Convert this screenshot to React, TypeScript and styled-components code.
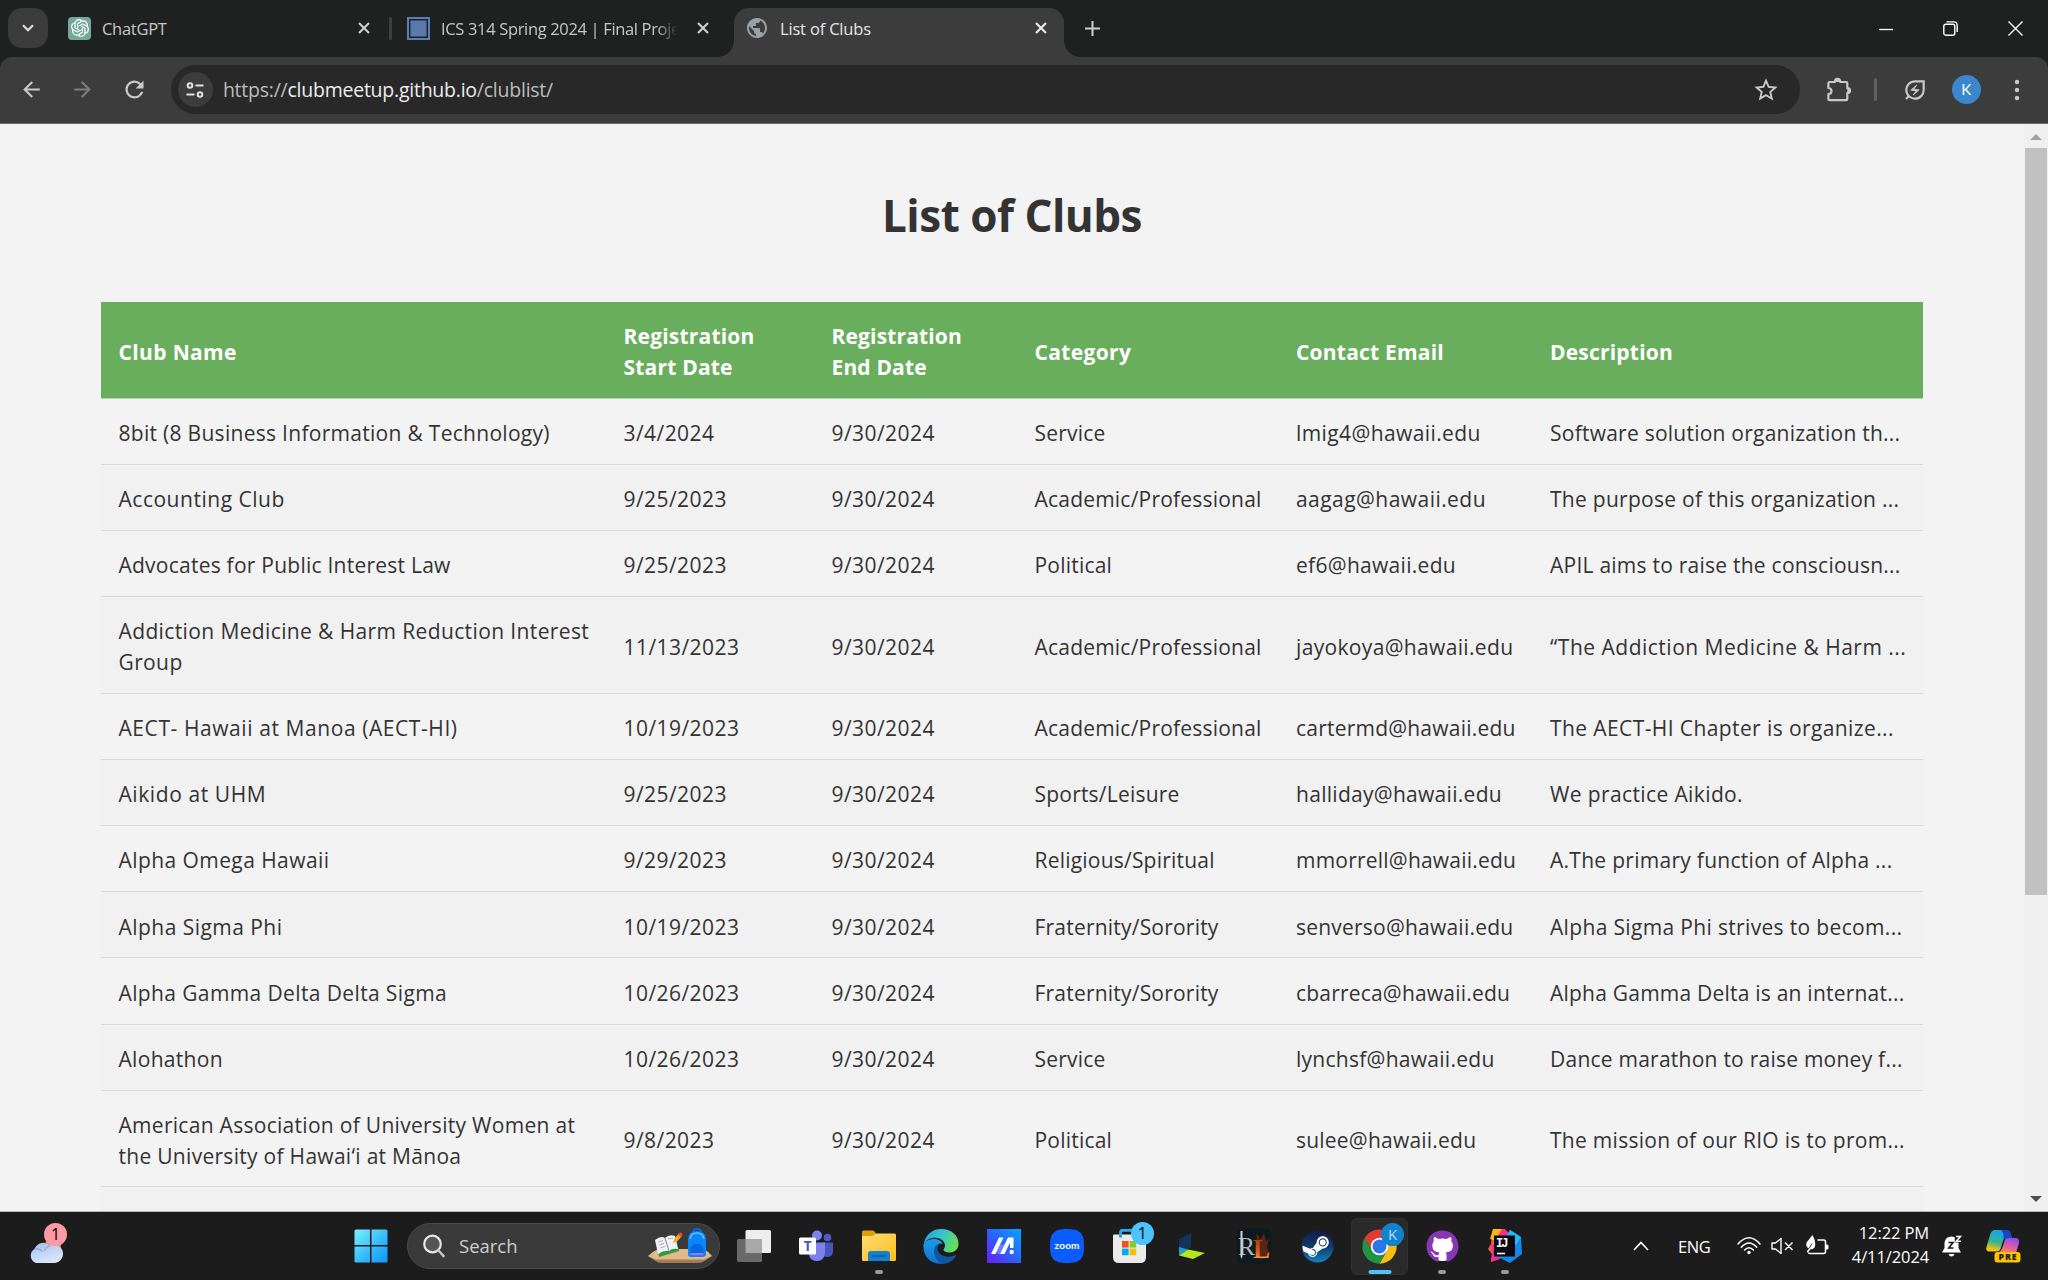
import React from 'react';
import styled, { createGlobalStyle, css } from 'styled-components';
import { FaGithub, FaSteam } from 'react-icons/fa';
import { SiOpenai } from 'react-icons/si';
import { MdArrowBack, MdArrowForward, MdRefresh, MdPublic, MdStarBorder, MdOutlineEnergySavingsLeaf } from 'react-icons/md';

const uiFont = `'Open Sans', 'Noto Sans', sans-serif`;

const Global = createGlobalStyle`
  *, *::before, *::after { box-sizing: border-box; }
  body { margin: 0; background: #1f2120; font-family: ${uiFont}; overflow: hidden; }
  svg { display: block; flex: none; }
`;

const Screen = styled.div`
  width: 2048px;
  height: 1280px;
  display: grid;
  grid-template-rows: 57px 67px 1088px 68px;
  overflow: hidden;
`;

/* ---------- Tab strip ---------- */

const TabStrip = styled.header`
  display: flex;
  align-items: flex-start;
  background: #1f2120;
  color: #c7c7c7;
`;

const TabSearch = styled.button`
  width: 40px;
  height: 40px;
  margin: 8px 8px 0;
  border: 0;
  padding: 0;
  border-radius: 14px;
  background: #3a3b3a;
  display: grid;
  place-items: center;
`;

const Tab = styled.div<{ $active?: boolean }>`
  position: relative;
  height: 49px;
  margin-top: 8px;
  display: flex;
  align-items: center;
  width: 332px;
  padding: 0 18px 9px 12px;
  ${(p) =>
    p.$active &&
    css`
      width: 330px;
      margin-left: 7px;
      padding: 0 17px 9px 11px;
      background: #3c3c3c;
      color: #e6e6e6;
      border-radius: 15px 15px 0 0;
      &::before,
      &::after {
        content: '';
        position: absolute;
        bottom: 0;
        width: 16px;
        height: 16px;
      }
      &::before {
        left: -16px;
        background: radial-gradient(circle at 0 0, transparent 15.5px, #3c3c3c 16px);
      }
      &::after {
        right: -16px;
        background: radial-gradient(circle at 100% 0, transparent 15.5px, #3c3c3c 16px);
      }
    `}
`;

const TabTitle = styled.span<{ $tracking: number; $fade?: boolean }>`
  flex: 1;
  margin: 2px 22px 0 11px;
  overflow: hidden;
  white-space: nowrap;
  font-size: 16.5px;
  line-height: 24px;
  letter-spacing: ${(p) => p.$tracking}px;
  ${(p) => p.$fade && css`
    margin-right: 17px;
    mask-image: linear-gradient(90deg, #000 90%, transparent 99%);
  `}
`;

const ChatBadge = styled.span`
  width: 23px;
  height: 23px;
  border-radius: 4px;
  background: #74a898;
  color: #fff;
  display: grid;
  place-items: center;
`;

const BlueSquare = styled.span`
  width: 23px;
  height: 23px;
  border: 2px solid #5f7eb0;
  background: #5c7aa8;
  box-shadow: inset 0 0 0 1.5px #17233a;
`;

const TabDivider = styled.span`
  width: 3px;
  height: 23px;
  margin: 17px 3px 0 1px;
  border-radius: 2px;
  background: #3d3e3d;
`;

const NewTab = styled.span`
  margin: 21px 0 0 21px;
`;

const WindowControls = styled.div`
  margin-left: auto;
  display: grid;
  grid-template-columns: repeat(3, 65px);
  height: 57px;
  justify-items: center;
  align-items: center;
`;

/* ---------- Toolbar ---------- */

const Toolbar = styled.nav`
  display: flex;
  align-items: center;
  padding: 0 5px 1px 6px;
  background: #3c3c3c;
  border-bottom: 1px solid #68696a;
  border-radius: 12px 12px 0 0;
`;

const ToolSlot = styled.span<{ $dim?: boolean }>`
  width: 51.3px;
  display: grid;
  place-items: center;
  color: ${(p) => (p.$dim ? '#7d7d7d' : '#c9c9c9')};
`;

const Omnibox = styled.div`
  width: 1629px;
  height: 49px;
  margin: 0 12px 0 11px;
  padding: 0 20px 0 7px;
  display: flex;
  align-items: center;
  border-radius: 25px;
  background: #282828;
  color: #c9c9c9;
`;

const SiteInfo = styled.span`
  width: 35px;
  height: 35px;
  border-radius: 50%;
  background: #3c3c3c;
  display: grid;
  place-items: center;
`;

const Url = styled.span`
  flex: 1;
  margin-left: 10px;
  color: #bdbdbd;
  font-size: 19.5px;
  letter-spacing: -0.24px;
  line-height: 28px;
`;

const Host = styled.span`
  color: #ededed;
`;

const ToolDivider = styled.span`
  width: 3px;
  height: 23px;
  margin: 0 12px 0 11px;
  border-radius: 2px;
  background: #606060;
`;

const Avatar = styled.span`
  width: 29px;
  height: 29px;
  border-radius: 50%;
  background: #3b86cc;
  color: #fff;
  font: 15px/29px Lato, sans-serif;
  text-align: center;
`;

/* ---------- Web page ---------- */

const Viewport = styled.main`
  display: grid;
  grid-template-columns: 2024px 24px;
  overflow: hidden;
  background: #f3f3f3;
  border-bottom: 1px solid #b5bab8;
`;

const Page = styled.section`
  padding: 0 101px;
  overflow: hidden;
  color: #333;
`;

const Title = styled.h1`
  height: 178px;
  margin: 0;
  padding-top: 60px;
  text-align: center;
  font-size: 44px;
  font-weight: 700;
  line-height: 62px;
  letter-spacing: -0.5px;
`;

const Row = styled.div<{ $striped?: boolean }>`
  display: grid;
  grid-template-columns: 505px 208px 203px 261.5px 254px 390.5px;
  align-items: center;
  min-height: 66.1px;
  padding: 19.2px 0 15.2px;
  border-bottom: 1px solid #dadada;
  background: ${(p) => (p.$striped ? '#f1f1f1' : '#f3f3f3')};
  font-size: 21px;
  line-height: 30.7px;
`;

const HeaderRow = styled(Row)`
  height: 97px;
  padding: 19.4px 0 15.2px;
  background: #69ae5c;
  border-bottom-color: #bccdb8;
  color: #fff;
  font-weight: 700;
`;

const Cell = styled.div<{ $tracking: number }>`
  padding-left: 17.5px;
  white-space: pre;
  letter-spacing: ${(p) => p.$tracking}px;
`;

const Scrollbar = styled.aside`
  display: flex;
  flex-direction: column;
  align-items: center;
  background: #f0f0f0;
  padding: 10px 1px 9px;
`;

const Thumb = styled.span`
  width: 22px;
  height: 747px;
  margin-top: 8px;
  margin-bottom: auto;
  background: #c1c1c1;
`;

/* ---------- Taskbar ---------- */

const Taskbar = styled.footer`
  display: flex;
  align-items: center;
  background: #1c1c1c;
  color: #fff;
`;

const Weather = styled.div`
  position: relative;
  width: 340px;
  padding: 9px 0 0 28px;
`;

const Slot = styled.div<{ $active?: boolean }>`
  position: relative;
  width: 62.6px;
  height: 57px;
  display: grid;
  place-items: center;
  ${(p) =>
    p.$active &&
    css`
      &::before {
        content: '';
        position: absolute;
        inset: 0 3px;
        border-radius: 6px;
        background: #2a2a2a;
        border: 1px solid #303030;
      }
    `}
`;

const IconBox = styled.span`
  position: relative;
`;

const Running = styled.span<{ $wide?: boolean }>`
  position: absolute;
  bottom: 1px;
  left: 50%;
  transform: translateX(-50%);
  width: ${(p) => (p.$wide ? 23 : 8)}px;
  height: 4px;
  border-radius: 2px;
  background: ${(p) => (p.$wide ? '#4cc2ff' : '#9a9a9a')};
`;

const Badge = styled.span<{ $bg: string; $fg: string; $left: number; $top: number; $size?: number }>`
  position: absolute;
  left: ${(p) => p.$left}px;
  top: ${(p) => p.$top}px;
  width: 23px;
  height: 23px;
  border-radius: 50%;
  background: ${(p) => p.$bg};
  color: ${(p) => p.$fg};
  font-size: ${(p) => p.$size ?? 16}px;
  line-height: 22px;
  text-align: center;
`;

const SearchBox = styled.div`
  width: 313px;
  height: 46px;
  margin: 0 2.4px 0 4.4px;
  padding: 0 7px 0 15px;
  display: flex;
  align-items: center;
  border-radius: 23px;
  border: 1px solid #4a4a4a;
  background: #3a3a3a;
`;

const SearchLabel = styled.span`
  flex: 1;
  margin-left: 14px;
  color: #cfcfcf;
  font-size: 18.5px;
  line-height: 26px;
`;

const GithubDisc = styled.span`
  display: block;
  border-radius: 50%;
  background: radial-gradient(circle, #fff 14px, transparent 15px);
  color: #8a35b5;
`;

const SteamDisc = styled.span`
  display: block;
  border-radius: 50%;
  background: radial-gradient(circle, #fff 14.5px, transparent 15.5px);
`;

const Tray = styled.div`
  margin-left: auto;
  padding-right: 16px;
  display: grid;
  grid-template-columns: 45px 59px 34px 34px 24px 100px 46px 57px;
  align-items: center;
`;

const Language = styled.span`
  padding-top: 1px;
  font-size: 16.5px;
  line-height: 24px;
  letter-spacing: -0.5px;
`;

const Clock = styled.div`
  text-align: right;
  font-size: 16.5px;
  line-height: 23.3px;
  letter-spacing: -0.1px;
  padding-bottom: 3px;
`;

const Centered = styled.span`
  display: grid;
  place-items: center;
`;

/* ---------- Icons ---------- */

const CloseIcon = ({ color = '#d0d0d0' }: { color?: string }) => (
  <svg width="12" height="12" viewBox="0 0 12 12">
    <path d="M1 1 L11 11 M11 1 L1 11" stroke={color} strokeWidth="2.1" />
  </svg>
);

const Puzzle = () => (
  <svg width="26" height="26" viewBox="0 0 26 26">
    <path
      d="M4.5 5H9.8C9.8 2.9 11 1.8 12.5 1.8S15.2 2.9 15.2 5H21.3Q22.3 5 22.3 6V11.2C24 11.2 25 12.2 25 13.6S24 16.1 22.3 16.1V22Q22.3 23.2 21.3 23.2H4.6Q3.4 23.2 3.4 22V17.2C5.4 17 6.5 15.8 6.5 14S5.3 11.2 3.4 11V6Q3.4 5 4.5 5Z"
      fill="none"
      stroke="#c9c9c9"
      strokeWidth="2.2"
      strokeLinejoin="round"
    />
    <path d="M9.8 5C9.8 2.9 11 1.8 12.5 1.8S15.2 2.9 15.2 5ZM22.3 11.2C24 11.2 25 12.2 25 13.6S24 16.1 22.3 16.1Z" fill="#c9c9c9" />
  </svg>
);

const CloudIcon = () => (
  <svg width="36" height="26" viewBox="0 0 36 26">
    <defs>
      <linearGradient id="cloud" x1="0" y1="0" x2="0.5" y2="1">
        <stop offset="0" stopColor="#9fb9ef" />
        <stop offset="0.55" stopColor="#c3d5f5" />
        <stop offset="1" stopColor="#d9e5fa" />
      </linearGradient>
    </defs>
    <circle cx="25" cy="7" r="8" fill="#f08a1c" />
    <path d="M8 25A7.8 7.8 0 0 1 6.5 11A9.5 9.5 0 0 1 22 7.5A9 9 0 0 1 35 16A8.7 8.7 0 0 1 27 25Z" fill="url(#cloud)" />
    <path d="M6.5 11Q11 9.8 14.5 13.4M16 13Q18 9 22 7.5" fill="none" stroke="#88a7e6" strokeWidth="1.2" />
  </svg>
);

const StartIcon = () => (
  <svg width="34" height="34" viewBox="0 0 34 34">
    <defs>
      <linearGradient id="win" x1="0" y1="0" x2="1" y2="1">
        <stop offset="0" stopColor="#7af3ff" />
        <stop offset="0.5" stopColor="#3dc0fb" />
        <stop offset="1" stopColor="#0a96fb" />
      </linearGradient>
    </defs>
    <path d="M2 .5H16V16H.5V2Q.5.5 2 .5ZM17.5 .5H32Q33.5 .5 33.5 2V16H17.5ZM.5 17.5H16V33.5H2Q.5 33.5 .5 32ZM17.5 17.5H33.5V32Q33.5 33.5 32 33.5H17.5Z" fill="url(#win)" />
  </svg>
);

const Lens = () => (
  <svg width="22" height="24" viewBox="0 0 22 24">
    <circle cx="9.5" cy="10" r="8.3" fill="#555" stroke="#e2e6e8" strokeWidth="2.2" />
    <path d="M15.5 16.5L20.5 22" stroke="#c4c8ca" strokeWidth="2.6" strokeLinecap="round" />
  </svg>
);

const DeskScene = () => (
  <svg width="64" height="36" viewBox="0 0 64 36">
    <path d="M0 28Q4 24 10 21H56Q61 24 64 28L56 33Q54 34.5 50 34.5H14Q10 34.5 8 33Z" fill="#dfb98c" />
    <path d="M0 28L8 31.5H56L64 28L56 33Q54 34.5 50 34.5H14Q10 34.5 8 33Z" fill="#a77c50" />
    <path d="M8 14L28 9L31 23L11 29Z" fill="#2f9a3e" />
    <path d="M7 12Q13 7 17 10Q21 6 27 8L30 21Q24 20 21 23Q16 22 10 26Z" fill="#f1f1f6" />
    <path d="M17 10L21 23" stroke="#9a9ab0" strokeWidth="1.2" />
    <path d="M10 14L15 12.5M11 17L16 15.5M12 20L17 18.5M20 11L25 10" stroke="#a6a6ba" strokeWidth="0.9" />
    <path d="M25 15L26.5 10.5L31 5.5L34 8L29 13.5Z" fill="#f9a825" />
    <path d="M30 6.5L32 4.5Q34 4 34.5 6L32.5 9Z" fill="#ef4444" />
    <path d="M45 4Q45 1 49 1T53 4" fill="none" stroke="#0a62d8" strokeWidth="2" />
    <path d="M40 12Q40 3 49 3T58 12V26Q58 29 55 29H43Q40 29 40 26Z" fill="#0a84ff" />
    <path d="M42 11Q43 5 49 5T56 11" fill="none" stroke="#6cc4ff" strokeWidth="1.5" />
    <path d="M42.5 21Q43 16 49 16T55.5 21V27H42.5Z" fill="#0667e0" />
    <path d="M42.5 25H55.5V27H42.5Z" fill="#b06cf5" />
  </svg>
);

const TaskViewIcon = () => (
  <svg width="34" height="32" viewBox="0 0 34 32">
    <rect x="8.5" y="0" width="25.5" height="23" rx="1.5" fill="#eeeeee" />
    <rect x="0" y="9" width="25" height="23" rx="1.5" fill="#696969" />
    <path d="M8.5 9H25V23H8.5Z" fill="#a9a9a9" />
  </svg>
);

const TeamsIcon = () => (
  <svg width="34" height="32" viewBox="0 0 34 32">
    <circle cx="28.5" cy="7.5" r="3.8" fill="#5059c9" />
    <circle cx="18" cy="5.5" r="5" fill="#7b83eb" />
    <path d="M24 12.5H34V21Q34 27 28 27Q24 26.5 23 24Z" fill="#4b53bc" />
    <path d="M10 12.5H26V23Q25 31 18 31Q11.5 31 10 25Z" fill="#7b83eb" />
    <rect x="0" y="7.5" width="17" height="17" rx="1.5" fill="#fff" />
    <text x="8.6" y="20.8" textAnchor="middle" fontFamily="Open Sans" fontWeight="700" fontSize="13.5" fill="#4b53bc">T</text>
  </svg>
);

const FolderIcon = () => (
  <svg width="34" height="32" viewBox="0 0 34 32">
    <defs>
      <linearGradient id="folder" x1="0" y1="0" x2="1" y2="1">
        <stop offset="0" stopColor="#ffdc73" />
        <stop offset="1" stopColor="#fbbf1f" />
      </linearGradient>
    </defs>
    <path d="M0 2Q0 .5 1.5 .5H11Q12.5 .5 13.5 3L14 7H0Z" fill="#e09f00" />
    <path d="M0 6H10Q12 6 13.5 3.5H32.5Q34 3.5 34 5V29.5Q34 31 32.5 31H1.5Q0 31 0 29.5Z" fill="url(#folder)" />
    <path d="M6 31V24Q6 21 9 21H25Q28 21 28 24V31Z" fill="#1480d0" />
    <path d="M10 26H24" stroke="#0b5291" strokeWidth="1.3" />
  </svg>
);

const EdgeIcon = () => (
  <svg width="36" height="35" viewBox="0 0 36 35">
    <defs>
      <linearGradient id="edgeTop" x1="0" y1="0.3" x2="1" y2="0.6">
        <stop offset="0" stopColor="#2a9fd8" />
        <stop offset="0.45" stopColor="#34c3d0" />
        <stop offset="1" stopColor="#6be04a" />
      </linearGradient>
      <linearGradient id="edgeSide" x1="0" y1="0" x2="0" y2="1">
        <stop offset="0" stopColor="#1b9de2" />
        <stop offset="1" stopColor="#0f72cf" />
      </linearGradient>
    </defs>
    <path d="M.5 16C2 6 9 0 18 0C29 0 35.5 7 35.5 14.5C35.5 20 32 23.5 27 23.5C22.5 23.5 20.5 22 20.5 20.8C20.5 20 22 19 22 16.5C22 12 17 8.8 12 8.8C6 8.8 2 12 .5 16Z" fill="url(#edgeTop)" />
    <path d="M.5 16C2 12 6 10 11 10C15 10 19 12 20 15C17 13.5 11.5 16 11.5 23C11.5 29 16 33.5 21 34.5C9 36.5 -.5 28 .5 16Z" fill="url(#edgeSide)" />
    <path d="M13 16.5C10 20 10.5 30 18.5 34.8C25 35.3 30.5 31.5 33 27C33.3 26 32.5 25.7 32 26C29 27.8 25 28.3 21 27C15.5 25 13 21 15.5 15.4Z" fill="#0f57a5" />
  </svg>
);

const ArmouryIcon = () => (
  <svg width="34" height="34" viewBox="0 0 34 34">
    <defs>
      <linearGradient id="asus" x1="0" y1="1" x2="1" y2="0">
        <stop offset="0" stopColor="#6a1cff" />
        <stop offset="0.5" stopColor="#2b62fb" />
        <stop offset="1" stopColor="#04a6ff" />
      </linearGradient>
    </defs>
    <rect width="34" height="34" fill="url(#asus)" />
    <path d="M4 25L12 8.5H16.5L8.5 25ZM13 25L21 8.5H26.5V19H23V13.5L17.5 25Z" fill="#fff" />
    <path d="M9.5 17L10.5 25H13L17.5 15Z" fill="#c6cbff" opacity="0.35" />
    <circle cx="24.7" cy="23" r="2.2" fill="#fff" />
  </svg>
);

const ZoomIcon = () => (
  <svg width="34" height="34" viewBox="0 0 34 34">
    <path d="M17 0C30 0 34 4 34 17S30 34 17 34S0 30 0 17S4 0 17 0Z" fill="#0b5cff" />
    <text x="17" y="20.3" textAnchor="middle" fontFamily="Lato" fontWeight="700" fontSize="10" textLength="25" fill="#fff">zoom</text>
  </svg>
);

const StoreIcon = () => (
  <svg width="33" height="34" viewBox="0 0 33 34">
    <path d="M7.5 8V3.5Q7.5 1.3 9.7 1.3H22" fill="none" stroke="#24b0ee" strokeWidth="2.8" />
    <path d="M0 6.5Q0 5.5 1 5.5H32Q33 5.5 33 6.5V28Q33 34 27 34H6Q0 34 0 28Z" fill="#ebebeb" />
    <rect x="9" y="12" width="6.6" height="6.6" fill="#f1511b" />
    <rect x="16.6" y="12" width="6.6" height="6.6" fill="#80cc28" />
    <rect x="9" y="19.6" width="6.6" height="6.6" fill="#00adef" />
    <rect x="16.6" y="19.6" width="6.6" height="6.6" fill="#fbbc09" />
    <path d="M7.5 5.5V8.5" stroke="#1592c9" strokeWidth="2.8" />
  </svg>
);

const PlanesIcon = () => (
  <svg width="26" height="26" viewBox="0 0 26 26">
    <path d="M0 6L12 0V14L0 22Z" fill="#10345a" />
    <path d="M0 14L9 16.5L0 22.5Z" fill="#1b9dd9" />
    <path d="M0 22.5L9 16.5L26 20L14 26Z" fill="#b5e61d" />
  </svg>
);

const RuneIcon = () => (
  <svg width="36" height="36" viewBox="0 0 36 36">
    <defs>
      <linearGradient id="fire" x1="0" y1="0" x2="0" y2="1">
        <stop offset="0" stopColor="#8a3208" />
        <stop offset="0.6" stopColor="#e05a10" />
        <stop offset="1" stopColor="#ffc27a" />
      </linearGradient>
    </defs>
    <rect x=".5" y=".5" width="35" height="35" rx="6" fill="#0d1a20" />
    <path d="M20 6Q25 8 23 14L28 5L30 14L33 10L31 20L34 26Q30 32 24 31Z" fill="#7a2c0c" opacity="0.7" />
    <text x="2" y="27" fontFamily="Liberation Serif" fontWeight="400" fontSize="26" textLength="17" lengthAdjust="spacingAndGlyphs" fill="#aeb9bd">R</text>
    <text x="17" y="29.5" fontFamily="Liberation Serif" fontWeight="700" fontSize="27" textLength="17" lengthAdjust="spacingAndGlyphs" fill="url(#fire)">L</text>
    <path d="M6.5 3V28L5.5 31L4.5 28V3Z" fill="#c9d4d8" />
  </svg>
);

const ChromeIcon = () => (
  <svg width="35" height="35" viewBox="-17.5 -17.5 35 35">
    <path d="M-14.85 -8.55A17.15 17.15 0 0 1 14.85 -8.55L0 -8.55L-7.4 4.27Z" fill="#e33b2e" />
    <path d="M14.85 -8.55A17.15 17.15 0 0 1 0 17.15L7.4 4.27L0 -8.55Z" fill="#fbbc0e" />
    <path d="M0 17.15A17.15 17.15 0 0 1 -14.85 -8.55L-7.4 4.27L7.4 4.27Z" fill="#229342" />
    <circle r="8.7" fill="#fff" />
    <circle r="6.9" fill="#2d76ea" />
  </svg>
);

const IdeaIcon = () => (
  <svg width="34" height="35" viewBox="0 0 34 35">
    <path d="M5 0H16L18 18L10 30L3 33L4 25L0 20L3 15Z" fill="#fc5a3c" />
    <path d="M5 0H14L8 12L2 10Z" fill="#fdb60d" />
    <path d="M3 15L16 18L12 30L3 33L4 25Z" fill="#e8328f" />
    <path d="M14 0H17L24 8L8 10Z" fill="#fe2f7c" />
    <path d="M22 1L33 8L34 25L22 34L10 28L17 8Z" fill="#1588e8" />
    <path d="M22 1L33 8L28 16L18 8Z" fill="#21b8f5" />
    <rect x="6" y="6.5" width="21" height="21" fill="#0c0710" />
    <text x="8" y="17.5" fontFamily="Liberation Mono" fontWeight="700" fontSize="12" textLength="12.5" fill="#fff">IJ</text>
    <path d="M9 24.5H17" stroke="#fff" strokeWidth="1.6" />
  </svg>
);

const WifiIcon = () => (
  <svg width="24" height="20" viewBox="0 0 24 20" fill="none" stroke="#fff" strokeWidth="1.5" strokeLinecap="round">
    <path d="M1 8Q12 -4.5 23 8M4.3 11.2Q12 2.6 19.7 11.2M7.6 14Q12 9.3 16.4 14" />
    <circle cx="12" cy="16.5" r="1.7" fill="#fff" stroke="none" />
  </svg>
);

const MutedIcon = () => (
  <svg width="23" height="18" viewBox="0 0 23 18" fill="none" stroke="#fff" strokeWidth="1.4">
    <path d="M1 6H4.5L10 1.5V16.5L4.5 12H1ZM14 5.5L21.5 13M21.5 5.5L14 13" strokeLinejoin="round" />
  </svg>
);

const BatteryIcon = () => (
  <svg width="24" height="22" viewBox="0 0 24 22">
    <path d="M12.500 5H18.500Q20.500 5 20.500 7V16.500Q20.500 18.500 18.500 18.500H5Q3.500 18.500 3 17.500" fill="none" stroke="#fff" strokeWidth="1.500" />
    <path d="M20.800 9.500H22Q23.500 9.500 23.500 11V13Q23.500 14.500 22 14.500H20.800Z" fill="#fff" />
    <path d="M7.500 0Q10.500 5 10.300 9.500Q10 14.500 5.500 14.200L3 17.500L1.700 16.600L4 13.500Q.2 11.500 1.500 7.500Q3.500 5 7.500 0Z" fill="#fff" />
    <path d="M4 13.500L7 8.500" stroke="#1c1c1c" strokeWidth="0.900" />
  </svg>
);

const BellIcon = () => (
  <svg width="21" height="22" viewBox="0 0 21 22">
    <path d="M9.5 1.5Q15.5 1.5 16.5 7.5V13L19 17.5H0L2.5 13V7.5Q3.5 1.5 9.5 1.5Z" fill="#fff" />
    <path d="M6.5 19H12.5Q11.5 21.5 9.5 21.5T6.5 19Z" fill="#fff" />
    <path d="M12.8 -1H21V7.500H12.800Z" fill="#1c1c1c" />
    <path d="M14 1.500H18.500L14.300 6.300H19" fill="none" stroke="#fff" strokeWidth="1.500" />
    <path d="M6.500 7.500H11L6.800 13H11.500" fill="none" stroke="#1c1c1c" strokeWidth="1.600" />
  </svg>
);

const CopilotIcon = () => (
  <svg width="35" height="34" viewBox="0 0 35 34">
    <defs>
      <linearGradient id="copA" x1="0.3" y1="0" x2="0" y2="1">
        <stop offset="0" stopColor="#16a5e8" />
        <stop offset="0.5" stopColor="#38b48b" />
        <stop offset="0.85" stopColor="#f2c313" />
      </linearGradient>
      <linearGradient id="copB" x1="0.7" y1="0" x2="0.3" y2="1">
        <stop offset="0" stopColor="#8a4df0" />
        <stop offset="0.5" stopColor="#e05aa8" />
        <stop offset="1" stopColor="#f88a4a" />
      </linearGradient>
    </defs>
    <path d="M9 1H20Q24 1 25 6L26 9H21Q18 9 17 12L14.5 20Q13.5 22.5 10 22.5H3Q-.5 22.5 .5 18L4 6Q5.5 1 9 1Z" fill="url(#copA)" />
    <path d="M15 1H20Q24 1 25 6L26 9H21Q18.5 9 17.5 11Q18 3 15 1Z" fill="#1445c8" />
    <path d="M22 9H29Q34 9 33 14L30 24H10Q15 24 17 17L18.5 12Q19.5 9 22 9Z" fill="url(#copB)" />
    <rect x="8.5" y="23" width="26" height="10.5" rx="3" fill="#ffc400" />
    <text x="21.5" y="31.3" textAnchor="middle" fontFamily="Open Sans" fontWeight="800" fontSize="8.8" textLength="18" fill="#1c1c1c">PRE</text>
  </svg>
);

/* ---------- Data ---------- */

type Club = {
  name: string;
  start: string;
  category: string;
  email: string;
  about: string;
  nameTracking?: number;
  emailTracking?: number;
  aboutTracking?: number;
};

const endDate = '9/30/2024';

const clubs: Club[] = [
  { name: '8bit (8 Business Information & Technology)', start: '3/4/2024', category: 'Service', email: 'lmig4@hawaii.edu', about: 'Software solution organization th...', nameTracking: 0.29, emailTracking: 0.4 },
  { name: 'Accounting Club', start: '9/25/2023', category: 'Academic/Professional', email: 'aagag@hawaii.edu', about: 'The purpose of this organization ...', nameTracking: 0.52, emailTracking: 0.45, aboutTracking: 0.28 },
  { name: 'Advocates for Public Interest Law', start: '9/25/2023', category: 'Political', email: 'ef6@hawaii.edu', about: 'APIL aims to raise the consciousn...', nameTracking: 0.24, emailTracking: 0.3 },
  { name: 'Addiction Medicine & Harm Reduction Interest\nGroup', start: '11/13/2023', category: 'Academic/Professional', email: 'jayokoya@hawaii.edu', about: '“The Addiction Medicine & Harm ...', nameTracking: 0.38, emailTracking: 0.34, aboutTracking: 0.5 },
  { name: 'AECT- Hawaii at Manoa (AECT-HI)', start: '10/19/2023', category: 'Academic/Professional', email: 'cartermd@hawaii.edu', about: 'The AECT-HI Chapter is organize...', nameTracking: 0.58, aboutTracking: 0.4 },
  { name: 'Aikido at UHM', start: '9/25/2023', category: 'Sports/Leisure', email: 'halliday@hawaii.edu', about: 'We practice Aikido.', nameTracking: 0.58, emailTracking: 0.29, aboutTracking: 0.38 },
  { name: 'Alpha Omega Hawaii', start: '9/29/2023', category: 'Religious/Spiritual', email: 'mmorrell@hawaii.edu', about: 'A.The primary function of Alpha ...', nameTracking: 0.43, aboutTracking: 0.28 },
  { name: 'Alpha Sigma Phi', start: '10/19/2023', category: 'Fraternity/Sorority', email: 'senverso@hawaii.edu', about: 'Alpha Sigma Phi strives to becom...', nameTracking: 0.46, aboutTracking: 0.34 },
  { name: 'Alpha Gamma Delta Delta Sigma', start: '10/26/2023', category: 'Fraternity/Sorority', email: 'cbarreca@hawaii.edu', about: 'Alpha Gamma Delta is an internat...', nameTracking: 0.38, emailTracking: 0.2, aboutTracking: 0.22 },
  { name: 'Alohathon', start: '10/26/2023', category: 'Service', email: 'lynchsf@hawaii.edu', about: 'Dance marathon to raise money f...', emailTracking: 0.27 },
  { name: 'American Association of University Women at\nthe University of Hawai‘i at Mānoa', start: '9/8/2023', category: 'Political', email: 'sulee@hawaii.edu', about: 'The mission of our RIO is to prom...', nameTracking: 0.29, aboutTracking: 0.29 },
];

export default function App() {
  return (
    <Screen>
      <Global />
      <TabStrip>
        <TabSearch>
          <svg width="12" height="8" viewBox="0 0 12 8">
            <path d="M1 1.2L6 6.2L11 1.2" fill="none" stroke="#dedede" strokeWidth="2.2" />
          </svg>
        </TabSearch>
        <Tab>
          <ChatBadge><SiOpenai size={18} /></ChatBadge>
          <TabTitle $tracking={-0.28}>ChatGPT</TabTitle>
          <CloseIcon />
        </Tab>
        <TabDivider />
        <Tab>
          <BlueSquare />
          <TabTitle $tracking={-0.34} $fade>ICS 314 Spring 2024 | Final Proje</TabTitle>
          <CloseIcon />
        </Tab>
        <Tab $active>
          <MdPublic size={24} color="#9aa0a6" />
          <TabTitle $tracking={-0.18}>List of Clubs</TabTitle>
          <CloseIcon color="#ececec" />
        </Tab>
        <NewTab>
          <svg width="15" height="15" viewBox="0 0 15 15">
            <path d="M7.5 0V15M0 7.5H15" stroke="#cfcfcf" strokeWidth="2" />
          </svg>
        </NewTab>
        <WindowControls>
          <svg width="14" height="14" viewBox="0 0 14 14"><path d="M0 7.5H14" stroke="#fff" strokeWidth="1.3" /></svg>
          <svg width="15" height="15" viewBox="0 0 15 15" fill="none" stroke="#fff" strokeWidth="1.4">
            <rect x="0.8" y="3.2" width="11" height="11" rx="2" />
            <path d="M3.5 0.9H10.5Q14.2 0.9 14.2 4.6V11" />
          </svg>
          <svg width="15" height="15" viewBox="0 0 15 15"><path d="M0.5 0.5L14.5 14.5M14.5 0.5L0.5 14.5" stroke="#fff" strokeWidth="1.4" /></svg>
        </WindowControls>
      </TabStrip>

      <Toolbar>
        <ToolSlot><MdArrowBack size={25} /></ToolSlot>
        <ToolSlot $dim><MdArrowForward size={25} /></ToolSlot>
        <ToolSlot><MdRefresh size={27} /></ToolSlot>
        <Omnibox>
          <SiteInfo>
            <svg width="18" height="16" viewBox="0 0 18 16" fill="none" stroke="#e0e0e0" strokeWidth="2">
              <circle cx="4" cy="3.5" r="2.3" />
              <path d="M9.5 3.5H17.5M0.5 12.5H8.5" />
              <circle cx="14" cy="12.5" r="2.3" />
            </svg>
          </SiteInfo>
          <Url>https://<Host>clubmeetup.github.io</Host>/clublist/</Url>
          <MdStarBorder size={28} />
        </Omnibox>
        <ToolSlot><Puzzle /></ToolSlot>
        <ToolDivider />
        <ToolSlot><MdOutlineEnergySavingsLeaf size={26} /></ToolSlot>
        <ToolSlot><Avatar>K</Avatar></ToolSlot>
        <ToolSlot>
          <svg width="6" height="22" viewBox="0 0 6 22" fill="#c9c9c9">
            <circle cx="3" cy="3" r="2.2" /><circle cx="3" cy="11" r="2.2" /><circle cx="3" cy="19" r="2.2" />
          </svg>
        </ToolSlot>
      </Toolbar>

      <Viewport>
        <Page>
          <Title>List of Clubs</Title>
          <HeaderRow>
            <Cell $tracking={0.36}>Club Name</Cell>
            <Cell $tracking={0.2}>{'Registration\nStart Date'}</Cell>
            <Cell $tracking={0.15}>{'Registration\nEnd Date'}</Cell>
            <Cell $tracking={0.35}>Category</Cell>
            <Cell $tracking={0.21}>Contact Email</Cell>
            <Cell $tracking={0.2}>Description</Cell>
          </HeaderRow>
          {clubs.map((club, i) => (
            <Row key={club.name} $striped={i % 2 === 1}>
              <Cell $tracking={club.nameTracking ?? 0.31}>{club.name}</Cell>
              <Cell $tracking={0.44}>{club.start}</Cell>
              <Cell $tracking={0.44}>{endDate}</Cell>
              <Cell $tracking={0.21}>{club.category}</Cell>
              <Cell $tracking={club.emailTracking ?? 0.22}>{club.email}</Cell>
              <Cell $tracking={club.aboutTracking ?? 0.24}>{club.about}</Cell>
            </Row>
          ))}
          <Row $striped />
        </Page>
        <Scrollbar>
          <svg width="12" height="6" viewBox="0 0 12 6"><path d="M0 6L6 0L12 6Z" fill="#a3a3a3" /></svg>
          <Thumb />
          <svg width="12" height="6" viewBox="0 0 12 6"><path d="M0 0H12L6 6Z" fill="#505050" /></svg>
        </Scrollbar>
      </Viewport>

      <Taskbar>
        <Weather>
          <CloudIcon />
          <Badge $bg="#ff99a4" $fg="#000" $left={44} $top={-6}>1</Badge>
        </Weather>
        <Slot><StartIcon /></Slot>
        <SearchBox>
          <Lens />
          <SearchLabel>Search</SearchLabel>
          <DeskScene />
        </SearchBox>
        <Slot><TaskViewIcon /></Slot>
        <Slot><TeamsIcon /></Slot>
        <Slot><FolderIcon /><Running /></Slot>
        <Slot><EdgeIcon /></Slot>
        <Slot><ArmouryIcon /></Slot>
        <Slot><ZoomIcon /></Slot>
        <Slot>
          <IconBox><StoreIcon /><Badge $bg="#4cc2ff" $fg="#000" $left={18} $top={-7}>1</Badge></IconBox>
        </Slot>
        <Slot><PlanesIcon /></Slot>
        <Slot><RuneIcon /></Slot>
        <Slot>
          <SteamDisc>
            <svg width="0" height="0" viewBox="0 0 1 1">
              <defs>
                <linearGradient id="steam" x1="0" y1="0" x2="0" y2="1">
                  <stop offset="0" stopColor="#151b44" />
                  <stop offset="0.5" stopColor="#0d3a70" />
                  <stop offset="1" stopColor="#1583bd" />
                </linearGradient>
              </defs>
            </svg>
            <FaSteam size={33} fill="url(#steam)" stroke="none" />
          </SteamDisc>
        </Slot>
        <Slot $active>
          <IconBox><ChromeIcon /><Badge $bg="#0f84cc" $fg="#b9dcf5" $left={19} $top={-6} $size={15}>K</Badge></IconBox>
          <Running $wide />
        </Slot>
        <Slot><GithubDisc><FaGithub size={33} /></GithubDisc><Running /></Slot>
        <Slot><IdeaIcon /><Running /></Slot>
        <Tray>
          <svg width="16" height="10" viewBox="0 0 16 10"><path d="M1 9L8 1.5L15 9" fill="none" stroke="#fff" strokeWidth="1.6" /></svg>
          <Language>ENG</Language>
          <WifiIcon />
          <MutedIcon />
          <BatteryIcon />
          <Clock>
            <div>12:22 PM</div>
            <div>4/11/2024</div>
          </Clock>
          <Centered><BellIcon /></Centered>
          <Centered><CopilotIcon /></Centered>
        </Tray>
      </Taskbar>
    </Screen>
  );
}
